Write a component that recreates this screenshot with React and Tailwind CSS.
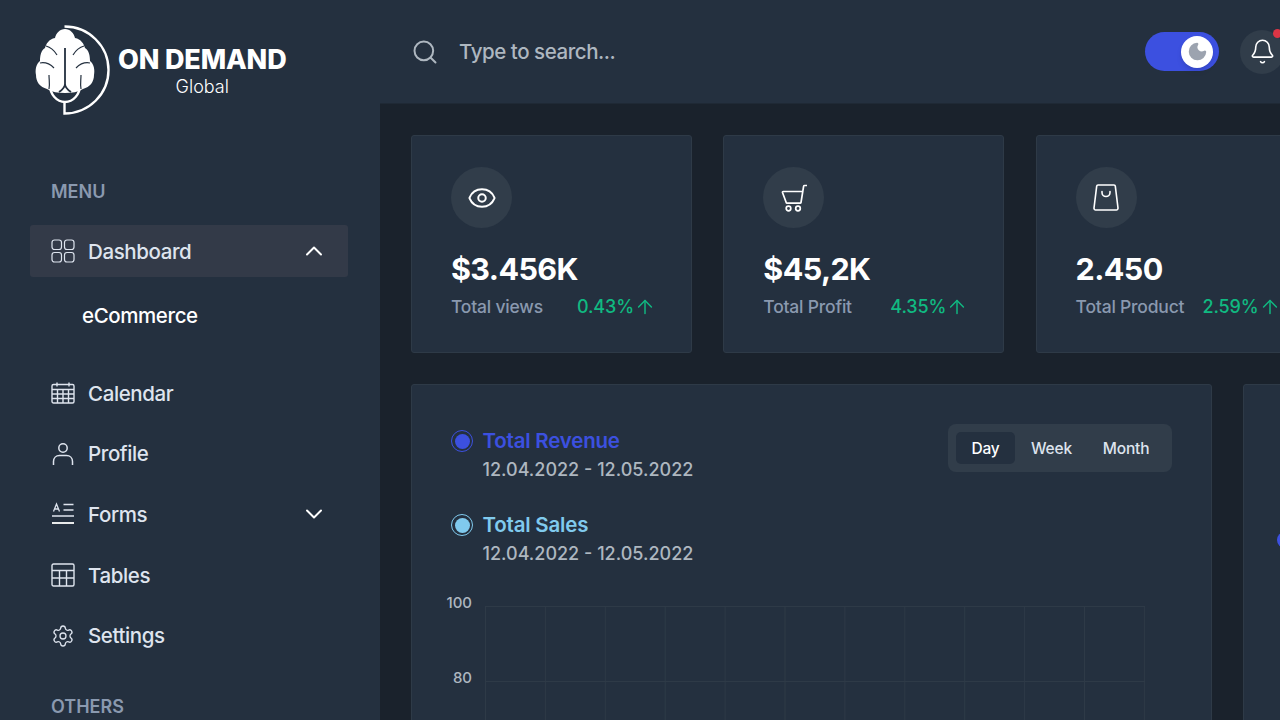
import { Search, Bell, Eye, ChevronUp, ChevronDown, ArrowUp, Settings, Moon } from "lucide-react";

const font = { fontFamily: "Inter, sans-serif" };

function Logo() {
  return (
    <div className="flex items-center h-[140px] pl-[35px] shrink-0">
      <svg width="76" height="92" viewBox="35 24 76 92" className="shrink-0">
        <path d="M64.5 26.5 A44 43.5 0 0 1 64.5 113.5 V103" fill="none" stroke="#fff" strokeWidth="2.4" />
        <path d="M50 85 A15 17 0 0 0 80 85" fill="none" stroke="#fff" strokeWidth="2.4" />
        <path d="M65 29 C60 29 56 33 55 38 C49 39 46 44 45 48 C41 50 40 56 40 61 C36 64 35 70 36 75 C36 82 40 87 47 89 C52 92 58 93 65 93 C72 93 78 92 83 89 C90 87 94 82 94 75 C95 70 94 64 90 61 C90 56 89 50 85 48 C84 44 81 39 75 38 C74 33 70 29 65 29 Z" fill="#fff" />
        <path d="M65 48 V84 M65 84 C65 88 62 90 59 92 M65 84 C65 88 68 90 71 92" fill="none" stroke="#24303f" strokeWidth="1.8" />
        <path d="M46 46 C50 47 54 50 57 55 M40 63 C45 62 50 64 54 68 M49 75 C49 80 50 84 49 89" fill="none" stroke="#24303f" strokeWidth="1.2" />
        <path d="M84 46 C80 47 76 50 73 55 M90 63 C85 62 80 64 76 68 M81 75 C81 80 80 84 81 89" fill="none" stroke="#24303f" strokeWidth="1.2" />
      </svg>
      <div className="flex flex-col items-center ml-[7px] mt-[1px]">
        <span className="text-[27px] leading-[32px] font-extrabold text-white tracking-[-0.15px] whitespace-nowrap">ON DEMAND</span>
        <span className="text-[18px] leading-[21px] font-light text-white">Global</span>
      </div>
    </div>
  );
}

function GridIcon() {
  return (
    <svg width="24" height="24" viewBox="0 0 24 24" fill="none" stroke="currentColor" strokeWidth="1.2">
      <rect x="1" y="1" width="9.500" height="9.500" rx="2.500" />
      <rect x="13.500" y="1" width="9.500" height="9.500" rx="2.500" />
      <rect x="1" y="13.500" width="9.500" height="9.500" rx="2.500" />
      <rect x="13.500" y="13.500" width="9.500" height="9.500" rx="2.500" />
    </svg>
  );
}

function CalendarIcon() {
  return (
    <svg width="24" height="24" viewBox="0 0 24 24" fill="none" stroke="currentColor" strokeWidth="1.4">
      <rect x="1" y="3.500" width="22" height="18.500" rx="1.500" />
      <path d="M6 1.500v4M18 1.500v4M1 8.500h22M1 13h22M1 17.500h22M6.500 8.500V22M12 8.500V22M17.500 8.500V22" />
    </svg>
  );
}

function UserIcon() {
  return (
    <svg width="24" height="24" viewBox="0 0 24 24" fill="none" stroke="currentColor" strokeWidth="1.5">
      <circle cx="12" cy="6" r="4.200" />
      <path d="M2.500 23v-3.500c0-3.500 2.500-6 6-6h7c3.500 0 6 2.500 6 6V23" />
    </svg>
  );
}

function FormsIcon() {
  return (
    <svg width="24" height="24" viewBox="0 0 24 24" fill="none" stroke="currentColor" strokeWidth="1.500">
      <path d="M2.500 9.500 L5.500 2 L8.500 9.500 M3.500 7h4" strokeWidth="1.300" />
      <path d="M12.500 2.500h10M12.500 8h10M1 14h22" />
      <path d="M1 21h22" strokeWidth="1.800" stroke="#fff" />
    </svg>
  );
}

function TableIcon() {
  return (
    <svg width="24" height="24" viewBox="0 0 24 24" fill="none" stroke="currentColor" strokeWidth="1.400">
      <rect x="1" y="1" width="22" height="22" rx="1.500" />
      <path d="M1 7.500h22M1 15h22M8.500 7.500V23M15.500 7.500V23" />
    </svg>
  );
}

function CartIcon() {
  return (
    <svg width="28" height="28" viewBox="0 0 28 28" fill="none" stroke="#fff" strokeWidth="1.700">
      <path d="M27 1.500h-2.500c-.5 0-.8.300-.9.800L21 18.500c-.1.400-.4.700-.8.700H7c-.4 0-.7-.3-.8-.7L2.500 8.500c-.1-.5.200-1 .8-1H22.500" strokeLinejoin="round" />
      <circle cx="8.500" cy="24.500" r="2.300" />
      <circle cx="18" cy="24.500" r="2.300" />
    </svg>
  );
}

function BagIcon() {
  return (
    <svg width="26" height="27" viewBox="0 0 26 27" fill="none" stroke="#fff" strokeWidth="1.600">
      <path d="M5 1h16c.7 0 1.200.4 1.300 1.100L25 24c.1 1-.6 2-1.600 2H2.600c-1 0-1.700-1-1.600-2L3.700 2.100C3.800 1.400 4.300 1 5 1Z" strokeLinejoin="round" />
      <path d="M9 7.500v1c0 2.300 1.800 4 4 4s4-1.700 4-4v-1" strokeLinecap="round" />
    </svg>
  );
}

function NavItem({ icon, label, chevron, active }) {
  return (
    <div className={`flex items-center h-[52px] pl-[21px] pr-[22px] gap-[13px] rounded-[3px] text-[#dee4ee] ${active ? "bg-[#333a48]" : ""}`}>
      <span className="w-[24px] h-[24px] flex items-center justify-center shrink-0">{icon}</span>
      <span className="flex-1 pt-[1px] text-[20.5px] tracking-[-0.4px] font-medium leading-[28px]">{label}</span>
      {chevron}
    </div>
  );
}

function Sidebar() {
  return (
    <aside className="w-[380px] h-[720px] shrink-0 bg-[#24303f] flex flex-col overflow-hidden">
      <Logo />
      <div className="pl-[30px] pr-[32px] pt-[39px]">
        <h3 className="pl-[21px] text-[18px] leading-[26px] font-semibold text-[#8a99af] mb-[20px]">MENU</h3>
        <NavItem
          active
          icon={<GridIcon />}
          label="Dashboard"
          chevron={<ChevronUp size={28} strokeWidth={1.700} color="#fff" className="-m-[2px]" />}
        />
        <div className="pl-[52px] pt-[25px] pb-[37px] text-[20.5px] tracking-[-0.4px] leading-[28px] font-medium text-white">eCommerce</div>
        <div className="flex flex-col gap-[8.700px]">
          <NavItem icon={<CalendarIcon />} label="Calendar" />
          <NavItem icon={<UserIcon />} label="Profile" />
          <NavItem icon={<FormsIcon />} label="Forms" chevron={<ChevronDown size={28} strokeWidth={1.700} color="#fff" className="-m-[2px]" />} />
          <NavItem icon={<TableIcon />} label="Tables" />
          <NavItem icon={<Settings size={28} strokeWidth={1.300} />} label="Settings" />
        </div>
        <h3 className="pl-[21px] mt-[34px] text-[18px] leading-[22px] font-semibold text-[#8a99af]">OTHERS</h3>
      </div>
    </aside>
  );
}

function Header() {
  return (
    <header className="h-[103px] shrink-0 w-[900px] bg-[#24303f] flex items-center pl-[31px] shadow-[0_1px_0_#1f2935]">
      <Search size={28} strokeWidth={1.700} color="#aeb7c0" className="shrink-0" />
      <span className="ml-[20px] pt-[1px] text-[20.5px] tracking-[-0.45px] font-medium text-[#aeb7c0]">Type to search...</span>
      <div className="ml-auto w-[74px] h-[39px] rounded-full bg-[#3c50e0] flex items-center justify-end pr-[6px] mr-[21px] shrink-0">
        <div className="w-[32px] h-[32px] rounded-full bg-white flex items-center justify-center shadow-md">
          <Moon size={21} fill="#9ca3af" color="#9ca3af" />
        </div>
      </div>
      <div className="relative w-[44px] h-[44px] rounded-full bg-[#313d4a] flex items-center justify-center shrink-0 -mr-[4px]">
        <Bell size={27} strokeWidth={1.400} color="#fff" />
        <span className="absolute top-[-1px] right-[2px] w-[9px] h-[9px] rounded-full bg-[#dc3545]" />
      </div>
    </header>
  );
}

function StatCard({ icon, value, label, pct }) {
  return (
    <div className="w-[281px] h-[218px] shrink-0 bg-[#24303f] border border-[#2e3a47] rounded-[3px] pl-[39px] pr-[39px] pt-[31px]">
      <div className="w-[61px] h-[61px] rounded-full bg-[#313d4a] flex items-center justify-center">{icon}</div>
      <div className="mt-[21px] text-[30.500px] tracking-[-0.6px] leading-[40px] font-bold text-white">{value}</div>
      <div className="mt-[4px] flex items-center justify-between">
        <span className="text-[17.500px] tracking-[-0.2px] leading-[28px] font-medium text-[#8a99af]">{label}</span>
        <span className="flex items-center text-[18px] tracking-[-0.1px] leading-[28px] font-medium text-[#10b981]">
          {pct}
          <ArrowUp size={22} strokeWidth={1.600} className="-mr-[4px]" />
        </span>
      </div>
    </div>
  );
}

function LegendItem({ color, ring, title, titleWeight }) {
  return (
    <div className="flex items-start gap-[9.500px]">
      <span className={`mt-[2px] w-[22px] h-[22px] rounded-full border flex items-center justify-center shrink-0 ${ring}`}>
        <span className={`w-[15px] h-[15px] rounded-full ${color}`} />
      </span>
      <div>
        <p className={`-mt-[1px] mb-[1px] text-[20.500px] tracking-[-0.2px] leading-[28px] ${titleWeight}`}>{title}</p>
        <p className="text-[18px] leading-[28px] font-medium text-[#aeb7c0]">12.04.2022 - 12.05.2022</p>
      </div>
    </div>
  );
}

function ChartGrid() {
  const xs = Array.from({ length: 12 }, (_, i) => 0.5 + i * 59.9);
  const ys = [0.5, 75.5, 150.5];
  return (
    <svg width="660" height="151" className="block shrink-0">
      {xs.map((x) => (
        <line key={x} x1={x} x2={x} y1="0" y2="151" stroke="#2e3a47" strokeWidth="1" />
      ))}
      {ys.map((y) => (
        <line key={y} x1="0" x2="660" y1={y} y2={y} stroke="#2e3a47" strokeWidth="1" />
      ))}
    </svg>
  );
}

function RevenueCard() {
  return (
    <div className="w-[801px] h-[500px] shrink-0 bg-[#24303f] border border-[#2e3a47] rounded-[3px] pl-[39px] pr-[39px] pt-[39px]">
      <div className="flex items-start justify-between">
        <div className="flex flex-col gap-[28px] mt-[4px]">
          <LegendItem color="bg-[#3c50e0]" ring="border-[#3c50e0]" title={<span className="text-[#3c50e0]">Total Revenue</span>} titleWeight="font-semibold" />
          <LegendItem color="bg-[#80caee]" ring="border-[#80caee]" title={<span className="text-[#80caee]">Total Sales</span>} titleWeight="font-semibold" />
        </div>
        <div className="w-[224px] h-[48px] rounded-[8px] bg-[#313d4a] flex items-center pl-[8px] text-[15.500px] leading-[32px] tracking-[-0.2px] font-medium text-[#dee4ee]">
          <span className="w-[59px] h-[32px] pt-[1px] rounded-[5px] bg-[#24303f] text-white flex items-center justify-center">Day</span>
          <span className="ml-[16px] pt-[1px]">Week</span>
          <span className="ml-[31px] pt-[1px]">Month</span>
        </div>
      </div>
      <div className="flex mt-[34px]">
        <div className="w-[26px] shrink-0 -ml-[5px] mr-[13px] text-right text-[15px] font-medium text-[#aeb7c0] flex flex-col gap-[53px] -mt-[10px]">
          <span className="leading-[22px]">100</span>
          <span className="leading-[22px]">80</span>
        </div>
        <div className="pt-[4px]">
          <ChartGrid />
        </div>
      </div>
    </div>
  );
}

function SideCard() {
  return (
    <div className="w-[400px] h-[500px] shrink-0 bg-[#24303f] border border-[#2e3a47] rounded-[3px] pl-[33px] pt-[147px]">
      <span className="block w-[16px] h-[16px] rounded-full bg-[#3c50e0]" />
    </div>
  );
}

export default function App() {
  return (
    <div className="w-[1280px] h-[720px] overflow-hidden flex bg-[#1a222c]" style={font}>
      <Sidebar />
      <div className="flex-1 min-w-0 flex flex-col overflow-hidden">
        <Header />
        <main className="pl-[31px] pt-[32px] flex flex-col gap-[31px]">
          <div className="flex gap-[31.300px]">
            <StatCard icon={<Eye size={30} strokeWidth={1.600} color="#fff" />} value="$3.456K" label="Total views" pct="0.43%" />
            <StatCard icon={<CartIcon />} value="$45,2K" label="Total Profit" pct="4.35%" />
            <StatCard icon={<BagIcon />} value="2.450" label="Total Product" pct="2.59%" />
          </div>
          <div className="flex gap-[31px]">
            <RevenueCard />
            <SideCard />
          </div>
        </main>
      </div>
    </div>
  );
}
